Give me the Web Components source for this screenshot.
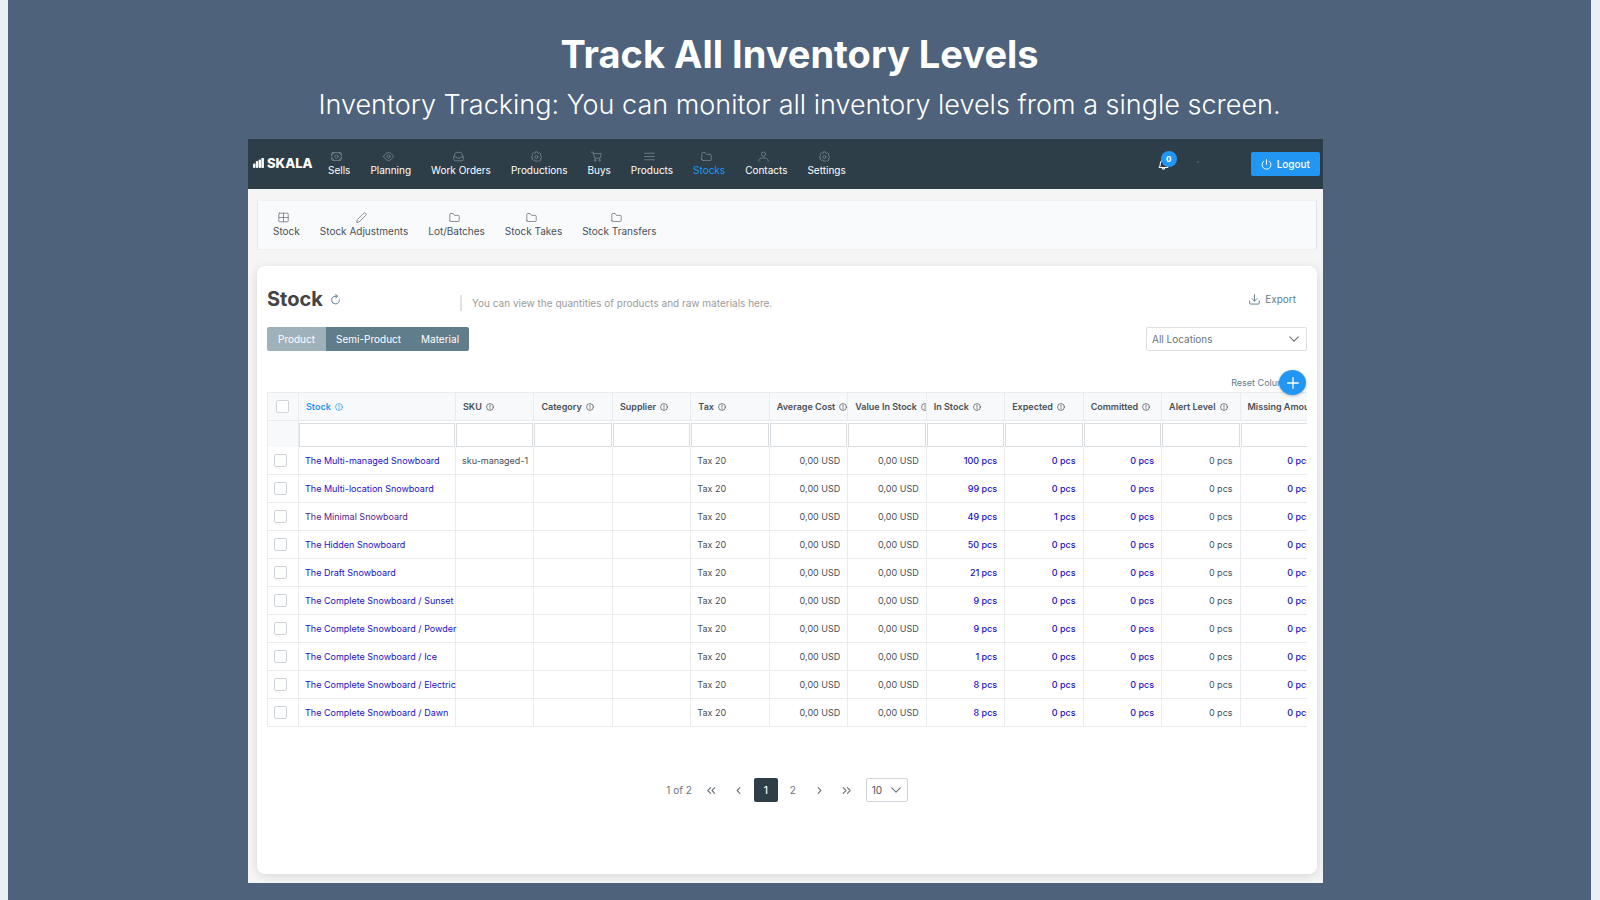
<!DOCTYPE html>
<html lang="en">
<head>
<meta charset="utf-8">
<title>Skala – Track All Inventory Levels</title>
<style>
  body {
    margin: 0;
    background: #4e627b;
    color: #495057;
    font: 400 10px/14px Inter, "Liberation Sans", sans-serif;
  }
</style>
</head>
<body>
<promo-slide>
  <promo-heading slot="heading">
    <span slot="title">Track All Inventory Levels</span>
    <span slot="subtitle">Inventory Tracking: You can monitor all inventory levels from a single screen.</span>
  </promo-heading>
  <app-window>
    <top-bar slot="bar">
      <nav-item tone="dark" icon="money">Sells</nav-item>
      <nav-item tone="dark" icon="eye">Planning</nav-item>
      <nav-item tone="dark" icon="inbox">Work Orders</nav-item>
      <nav-item tone="dark" icon="cog">Productions</nav-item>
      <nav-item tone="dark" icon="cart">Buys</nav-item>
      <nav-item tone="dark" icon="bars">Products</nav-item>
      <nav-item tone="dark" icon="folder" active>Stocks</nav-item>
      <nav-item tone="dark" icon="user">Contacts</nav-item>
      <nav-item tone="dark" icon="cog">Settings</nav-item>
    </top-bar>
    <sub-menu>
      <nav-item icon="table">Stock</nav-item>
      <nav-item icon="pencil">Stock Adjustments</nav-item>
      <nav-item icon="folder">Lot/Batches</nav-item>
      <nav-item icon="folder">Stock Takes</nav-item>
      <nav-item icon="folder">Stock Transfers</nav-item>
    </sub-menu>
    <stock-card>
      <stock-table></stock-table>
      <page-nav slot="footer"></page-nav>
    </stock-card>
  </app-window>
</promo-slide>

<script>
const define = (name, html) => customElements.define(name, class extends HTMLElement {
  connectedCallback() {
    if (this.shadowRoot) return;
    this.attachShadow({ mode: "open" }).innerHTML =
      typeof html === "function" ? html(this) : html;
  }
});

/* Line icons on a 14-unit grid. */
const ICONS = {
  money: '<rect x="1" y="2" width="12" height="10" rx="1"/><circle cx="7" cy="7" r="2.2"/><path d="M1 4.6A2.6 2.6 0 0 0 3.6 2M13 4.6A2.6 2.6 0 0 1 10.4 2M1 9.4A2.6 2.6 0 0 1 3.6 12M13 9.4A2.6 2.6 0 0 0 10.4 12"/>',
  eye: '<path d="M.8 7C2.2 4.2 4.4 2 7 2S11.8 4.200 13.200 7C11.800 9.800 9.600 12 7 12S2.200 9.800.8 7z"/><circle cx="7" cy="7" r="2"/>',
  inbox: '<path d="M1 7.500 3 2.800Q3.400 1.800 4.400 1.800H9.600Q10.600 1.800 11 2.800L13 7.500V11Q13 12.500 11.500 12.500H2.500Q1 12.500 1 11zM1 7.500H4.200L5.200 9.300H8.800L9.800 7.500H13"/>',
  cog: '<path d="M5.800 1h2.400l.4 1.600 1 .4 1.400-.8 1.700 1.700-.8 1.400.4 1 1.200.4v1.700l-1.200.6-.4 1 .8 1.400-1.700 1.600-1.400-.8-1 .4L8.200 13H5.800l-.4-1.400-1-.4-1.400.8-1.700-1.600.8-1.400-.4-1L.7 8.400V6.700L1.700 6.300l.4-1-.8-1.400L3 2.200l1.400.8 1-.4z"/><circle cx="7" cy="7.500" r="1.900"/>',
  cart: '<path d="M.6 1.500H2.800L4.600 9.200H11.400L13.200 3.300H3.300"/><circle cx="5.200" cy="11.800" r="1"/><circle cx="10.800" cy="11.800" r="1"/>',
  bars: '<path d="M.8 2.800H13.200M.8 7H13.200M.8 11.200H13.200"/>',
  folder: '<path d="M1 11V3Q1 1.900 2.100 1.900H5.200L7 4.300H11.800Q13 4.300 13 5.500V11Q13 12.100 11.900 12.100H2.100Q1 12.100 1 11z"/>',
  user: '<circle cx="7" cy="4" r="2.700"/><path d="M.9 12.800C1.200 10.200 3 8.900 5 8.900H9C11 8.900 12.800 10.200 13.100 12.800"/>',
  table: '<rect x="1" y="1.500" width="12" height="11" rx="1"/><path d="M1 7H13M7 1.500V12.500"/>',
  pencil: '<path d="M1 13 1.700 9.700 9.800 1.600Q11 .5 12.300 1.700 13.500 3 12.400 4.200L4.300 12.300z"/>',
  bell: '<path d="M1.500 10.800C2.800 9.600 2.900 8 2.900 6 2.900 3.400 4.500 1.800 7 1.800S11.100 3.400 11.100 6C11.100 8 11.200 9.600 12.500 10.800zM5.300 11C5.400 12.300 6 12.900 7 12.900S8.600 12.300 8.700 11"/>',
  power: '<path d="M7 .8V6.800M3.500 2.700A5.700 5.700 0 1 0 10.500 2.700"/>',
  refresh: '<path d="M7 2.800A4.900 4.900 0 1 0 11.900 7.700M7 2.800H9.500M7.200.4 9.600 2.800 7.200 5.200"/>',
  download: '<path d="M7 .8V9M3.900 6 7 9.100 10.100 6M.9 8.800V11.500Q.9 12.800 2.200 12.800H11.800Q13.100 12.800 13.100 11.500V8.800"/>',
  info: '<circle cx="7" cy="7" r="6"/><path d="M7 3.600V7.600M7 9.400V10.500"/>',
  plus: '<path d="M7 .8V13.200M.8 7H13.200"/>',
  down: '<path d="M1 4 7 10 13 4"/>',
  left: '<path d="M8.500 4 5.500 7 8.500 10"/>',
  right: '<path d="M5.500 4 8.500 7 5.500 10"/>',
  first: '<path d="M6 4 3 7 6 10M10.500 4 7.500 7 10.500 10"/>',
  last: '<path d="M3.500 4 6.500 7 3.500 10M8 4 11 7 8 10"/>'
};

define("line-icon", el => `
  <style>
    :host { display: inline-block; width: var(--size, 11px); height: var(--size, 11px); flex: none; }
    svg { display: block; width: 100%; height: 100%; fill: none; stroke: currentColor;
          stroke-width: var(--stroke, 1); stroke-linejoin: round; stroke-linecap: round; }
  </style>
  <svg viewBox="0 0 14 14" aria-hidden="true">${ICONS[el.getAttribute("name")]}</svg>`);

define("promo-slide", `
  <style>
    :host { display: block; box-sizing: border-box; min-height: 100vh; padding: 28px 0 16px;
            border: solid #e9eff4; border-width: 0 9px 0 8px; background: #4e627b; }
    .stage { display: grid; grid-template-columns: 240fr 1075fr 268fr; margin-top: 10px; }
    .stage slot { display: block; grid-column: 2; min-width: 0; }
  </style>
  <slot name="heading"></slot>
  <div class="stage"><slot></slot></div>`);

define("promo-heading", `
  <style>
    :host { display: block; text-align: center; color: #fff; }
    h1, p { margin: 0; }
    h1 { font-size: 38px; line-height: 52px; font-weight: 700; }
    p { font-size: 27px; line-height: 49px; font-weight: 300; }
  </style>
  <h1><slot name="title"></slot></h1>
  <p><slot name="subtitle"></slot></p>`);

define("app-window", `
  <style>
    :host { display: block; background: #f5f5f6; }
    main { padding: 11px 6px 9px 9px; }
  </style>
  <slot name="bar"></slot>
  <main><slot></slot></main>`);

define("nav-item", el => `
  <style>
    :host { display: block; --tint: #495057; --glyph: #6c757d; }
    :host([tone="dark"]) { --tint: #fff; --glyph: #7b8990; }
    :host([active]) { --tint: #2196f3; }
    a { display: flex; flex-direction: column; align-items: center; color: var(--tint);
        text-decoration: none; white-space: nowrap; line-height: 13px; }
    line-icon { color: var(--glyph); margin: 0 5px 2px 0; }
  </style>
  <a href="#"><line-icon name="${el.getAttribute("icon")}"></line-icon><span><slot></slot></span></a>`);

define("top-bar", `
  <style>
    :host { display: flex; align-items: center; box-sizing: border-box; height: 50px;
            padding: 0 3px 0 5px; background: #2d3e48; color: #fff; }
    .logo { display: flex; align-items: center; gap: 3px; width: 60px; margin: 0 15px 2px 0; color: #fff;
            text-decoration: none; font-size: 13px; line-height: 16px; font-weight: 800; }
    .logo svg { flex: none; width: 11px; height: 10px; fill: #fff; }
    nav { display: flex; gap: 20px; }
    .alerts { position: relative; margin-left: auto; padding: 0; border: 0; background: none; color: #fff; }
    .alerts line-icon { display: block; }
    .badge { position: absolute; left: 3px; top: -8px; width: 16px; height: 16px; border-radius: 8px;
             background: #2196f3; font: 700 8px/16px Inter, sans-serif; }
    .account { width: 54px; padding: 0 0 4px 28px; }
    .account i { display: block; width: 2px; height: 2px; border-radius: 1px; background: #52636d; }
    .logout { display: flex; align-items: center; gap: 5px; height: 24px; padding: 0 10px; border: 0;
              border-radius: 2px; background: #2196f3; color: #fff; font: 500 10px/14px Inter, sans-serif; }
  </style>
  <a class="logo" href="#">
    <svg viewBox="0 0 22 20" aria-hidden="true"><rect y="11" width="4.800" height="9" rx="2"/><rect x="5.600" y="6" width="4.800" height="14" rx="2"/><rect x="11.200" y="3" width="4.800" height="17" rx="2"/><rect x="16.800" width="5" height="20" rx="1"/></svg>
    <span>SKALA</span>
  </a>
  <nav><slot></slot></nav>
  <button class="alerts" aria-label="Notifications"><line-icon name="bell" style="--stroke:1.4"></line-icon><span class="badge">0</span></button>
  <div class="account"><i></i></div>
  <button class="logout"><line-icon name="power" style="--stroke:1.2"></line-icon>Logout</button>`);

define("sub-menu", `
  <style>
    :host { display: flex; align-items: center; gap: 20px; box-sizing: border-box; height: 50px;
            padding: 0 15px; background: #f9fafc; border: 1px solid #f0f1f3;
            border-left-color: #e4e6e9; border-right-color: #dfe1e4; }
  </style>
  <slot></slot>`);

define("stock-card", `
  <style>
    :host { display: block; box-sizing: border-box; margin-top: 16px; padding: 19px 10px 72px 10px;
            background: #fff; border-radius: 8px; box-shadow: 0 2px 10px rgba(0, 0, 0, .12); }
    button { font: inherit; border: 0; background: none; padding: 0; color: #607d8b; }
    header { display: flex; align-items: center; height: 28px; margin-bottom: 14px; }
    .heading { display: flex; align-items: center; gap: 7px; width: 193px; }
    h2 { margin: 0; font-size: 20px; line-height: 28px; font-weight: 700; color: #444; }
    .note { flex: 1; display: flex; align-items: center; gap: 10px; margin: 8px 0 0; color: #9b9b9b; }
    .note::before { content: ""; width: 2px; height: 16px; background: #dee2e6; }
    .export { display: flex; align-items: center; gap: 5px; margin-right: 11px; }
    .tools { display: flex; justify-content: space-between; }
    .switch { display: flex; height: 24px; border-radius: 2px; overflow: hidden; }
    .switch button { padding: 0 10px; background: #607d8b; color: #fff; }
    .switch button[aria-pressed="true"] { background: #9fb1ba; padding-right: 11px; padding-left: 11px; }
    .pick { display: grid; width: 161px; height: 24px; color: #6c757d; }
    .pick > * { grid-area: 1 / 1; }
    .pick line-icon { place-self: center end; margin-right: 8px; pointer-events: none; }
    select { appearance: none; box-sizing: border-box; width: 100%; padding: 0 24px 0 5px;
             border: 1px solid #dcdfe3; border-radius: 2px; background: #fff; color: #6c757d; font: inherit; }
    .extras { display: flex; justify-content: flex-end; align-items: center; height: 25px; margin: 19px 1px -3px 0; }
    .reset { font-size: 9px; white-space: nowrap; margin-right: -16px; }
    .add { position: relative; z-index: 1; display: grid; place-items: center; width: 27px; height: 25px;
           border-radius: 50%; background: #2196f3; color: #fff; box-shadow: 0 1px 3px rgba(0, 0, 0, .3); }
    footer { margin-top: 51px; }
  </style>
  <header>
    <div class="heading"><h2>Stock</h2><button aria-label="Refresh"><line-icon name="refresh" style="display:block;--stroke:1.2"></line-icon></button></div>
    <p class="note">You can view the quantities of products and raw materials here.</p>
    <button class="export"><line-icon name="download" style="--stroke:1.2"></line-icon>Export</button>
  </header>
  <div class="tools">
    <div class="switch" role="group" aria-label="Item type">
      <button aria-pressed="true">Product</button><button>Semi-Product</button><button>Material</button>
    </div>
    <label class="pick"><select aria-label="Location"><option>All Locations</option></select><line-icon name="down" style="--size:10px;--stroke:1.6"></line-icon></label>
  </div>
  <div class="extras"><button class="reset">Reset Columns</button><button class="add" aria-label="Add"><line-icon name="plus" style="--size:12px;--stroke:1.5"></line-icon></button></div>
  <slot></slot>
  <footer><slot name="footer"></slot></footer>`);

const COLUMNS = ["Stock", "SKU", "Category", "Supplier", "Tax", "Average Cost", "Value In Stock",
  "In Stock", "Expected", "Committed", "Alert Level", "Missing Amount"];
const STOCK = [
  ["The Multi-managed Snowboard", 100, 0, "sku-managed-1"],
  ["The Multi-location Snowboard", 99, 0],
  ["The Minimal Snowboard", 49, 1],
  ["The Hidden Snowboard", 50, 0],
  ["The Draft Snowboard", 21, 0],
  ["The Complete Snowboard / Sunset", 9, 0],
  ["The Complete Snowboard / Powder", 9, 0],
  ["The Complete Snowboard / Ice", 1, 0],
  ["The Complete Snowboard / Electric", 8, 0],
  ["The Complete Snowboard / Dawn", 8, 0]
];
const qty = n => `<td class="num"><a href="#">${n} pcs</a></td>`;

define("stock-table", () => `
  <style>
    :host { display: block; overflow: hidden; font-size: 9px; line-height: 12px; }
    table { width: calc(100% + 12px); min-width: 1050px; table-layout: fixed; border-collapse: separate;
            border-spacing: 0; border-left: 1px solid #e9ecef; }
    th, td { box-sizing: border-box; height: 28px; padding: 0 7px 0 6px; white-space: nowrap; text-align: left;
             border: solid #e9ecef; border-width: 0 1px 1px 0; }
    thead th { height: 29px; padding: 0 0 0 7px; overflow: hidden; background: #f8f9fa; border-top-width: 1px;
               font-weight: 600; color: #495057; }
    .filters td { height: 26px; padding: 1px 1px 0 0; border-width: 0; }
    .filters td:first-child { background: #f8f9fa; border-right-width: 1px; }
    th line-icon { --size: 8px; --stroke: 1.2; margin-left: 4px; vertical-align: -1px; }
    th.sorted { color: #2196f3; }
    th.pick, td.pick { padding: 0 0 0 6px; }
    th.pick { padding-left: 8px; }
    .num { text-align: right; }
    a { color: #1a10c8; text-decoration: none; }
    .num a { font-weight: 500; }
    a.seen { color: #551a8b; }
    input { display: block; box-sizing: border-box; margin: 0; border: 1px solid #ced4da; background: #fff; }
    input[type="text"] { width: 100%; height: 24px; padding: 0 4px; border-color: #dadde0; font: inherit; }
    input[type="checkbox"] { appearance: none; width: 13px; height: 13px; border-radius: 2px; }
  </style>
  <table>
    <colgroup><col style="width:31px"><col style="width:157px"><col span="11"></colgroup>
    <thead>
      <tr><th class="pick"><input type="checkbox" aria-label="Select all"></th>${COLUMNS.map((c, i) =>
        `<th scope="col"${i ? "" : ' class="sorted"'}>${c}<line-icon name="info"></line-icon></th>`).join("")}</tr>
      <tr class="filters"><td></td>${COLUMNS.map(c => `<td><input type="text" aria-label="Filter ${c}"></td>`).join("")}</tr>
    </thead>
    <tbody>${STOCK.map(([name, count, expected, sku], i) => `
      <tr><td class="pick"><input type="checkbox" aria-label="Select ${name}"></td>
      <td><a href="#"${i === 2 ? ' class="seen"' : ""}>${name}</a></td><td>${sku || ""}</td><td></td><td></td>
      <td>Tax 20</td><td class="num">0,00 USD</td><td class="num">0,00 USD</td>
      ${qty(count)}${qty(expected)}${qty(0)}<td class="num">0 pcs</td>${qty(0)}</tr>`).join("")}
    </tbody>
  </table>`);

define("page-nav", `
  <style>
    :host { display: flex; align-items: center; justify-content: center; gap: 3px; color: #6c757d; }
    span { margin-right: 5px; }
    button { display: grid; place-items: center; width: 24px; height: 24px; padding: 0; border: 0;
             border-radius: 2px; background: none; color: inherit; font: inherit; }
    button[aria-current] { background: #2d3e48; color: #fff; font-weight: 500; }
    label { display: grid; width: 42px; height: 24px; margin-left: 4px; }
    label > * { grid-area: 1 / 1; }
    label line-icon { place-self: center end; margin-right: 7px; pointer-events: none; }
    select { appearance: none; box-sizing: border-box; width: 100%; padding: 0 0 0 5px; border: 1px solid #ced4da;
             border-radius: 2px; background: #fff; color: #495057; font: inherit; }
    line-icon { --size: 13px; --stroke: 1.2; }
  </style>
  <span>1 of 2</span>
  <button aria-label="First page"><line-icon name="first"></line-icon></button>
  <button aria-label="Previous page"><line-icon name="left"></line-icon></button>
  <button aria-current="page">1</button>
  <button>2</button>
  <button aria-label="Next page"><line-icon name="right"></line-icon></button>
  <button aria-label="Last page"><line-icon name="last"></line-icon></button>
  <label><select aria-label="Rows per page"><option>10</option></select><line-icon name="down" style="--size:10px;--stroke:1.6"></line-icon></label>`);
</script>
</body>
</html>
